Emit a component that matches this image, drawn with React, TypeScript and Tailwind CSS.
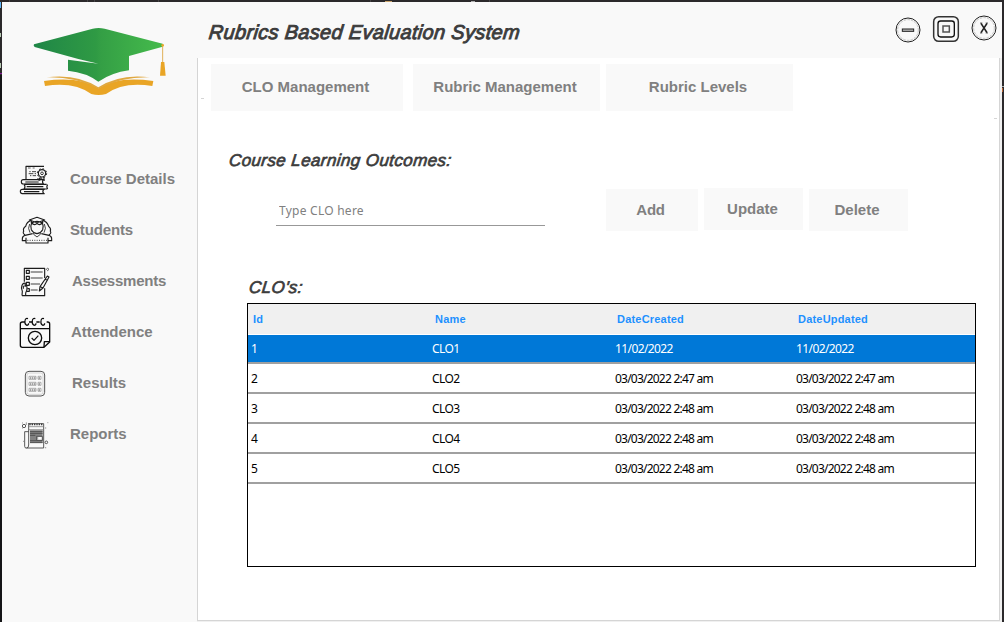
import React from "react";

const INK = "#1c1c1c";

function Logo() {
  return (
    <svg className="h-[120px] w-[195px] shrink-0" viewBox="6 6 585 360">
      <defs>
        <linearGradient id="cap" x1="0" x2="1" y1="0" y2="0">
          <stop offset="0" stopColor="#1f8647" />
          <stop offset="0.48" stopColor="#2f9a44" />
          <stop offset="0.52" stopColor="#349f45" />
          <stop offset="1" stopColor="#45bb4c" />
        </linearGradient>
      </defs>
      <path
        fill="url(#cap)"
        d="M102 133 L278 86 Q296 82 314 86 L488 131 Q492 136 488 140 L387 168 V211 Q335 218 295 245 Q260 218 204 212 V179 L295 191 L235 177 L104 141 Q99 137 102 133Z"
      />
      <path stroke="#e0b058" strokeWidth="3" d="M488 136 V186" />
      <circle cx="488" cy="136" r="4" fill="#e8a72c" />
      <path fill="#e9a526" d="M483 186 H493 L497 227 H480Z" />
      <path fill="#e9a526" d="M132 243 Q240 228 296 265 Q350 228 460 243 L457 258 Q370 244 318 282 Q296 288 274 282 Q222 244 135 258Z" />
      <path fill="#e0a840" d="M140 232 Q230 220 295 262 Q360 220 450 232 Q365 230 296 266 Q226 230 140 232Z" />
    </svg>
  );
}

const iconProps = {
  className: "h-[51px] w-9 shrink-0",
  fill: "none",
  stroke: INK,
  strokeWidth: 3.4,
  strokeLinejoin: "round" as const,
};

const CourseIcon = () => (
  <svg {...iconProps} viewBox="54 9 108 153">
    <path d="M78 88 V49 H132 M111 87 H124" />
    <path d="M84 54 H92 M98 54 H104" strokeWidth="2" />
    <path d="M88 65 H92 M96 65 H108 M86 71 H100 M104 71 H108 M90 77 H94 M98 77 H108" strokeWidth="2.5" />
    <circle cx="126" cy="70" r="11" strokeWidth="3.5" />
    <circle cx="126" cy="70" r="14" strokeWidth="3" strokeDasharray="5 6" />
    <circle cx="126" cy="70" r="4" strokeWidth="2.5" />
    <path d="M120 82 L117 91 L125 87 L133 91 L131 81" />
    <path d="M132 89 H70 Q64 89 64 95 Q64 102 70 102 H132 M130 89 Q125 95 130 102 M76 96 H116" />
    <path d="M74 103 H140 M143 104 Q138 110 143 117 M142 117 H72 Q78 110 72 103 M80 110 H130" />
    <path d="M134 118 H67 Q61 118 61 124 Q61 131 67 131 H134 M131 118 Q126 124 131 131 M72 125 H118" />
  </svg>
);

const StudentsIcon = () => (
  <svg {...iconProps} viewBox="54 162 108 153">
    <path d="M88 210 L111 202 L134 210 L111 218Z M94 213 V219 Q111 209 128 219 V213" />
    <path d="M94 211 Q80 215 77 229 Q68 235 71 244 Q67 249 75 255 M128 211 Q142 215 146 229 Q154 235 151 244 Q155 249 147 255" />
    <path d="M95 219 Q90 229 94 239 Q99 249 111 251 Q123 249 128 239 Q132 229 127 219 Q118 228 111 220 Q104 228 95 219" />
    <path d="M89 222 Q82 235 90 248 M133 222 Q140 235 132 248" strokeWidth="2.5" />
    <path d="M101 248 V253 L111 261 L121 253 V248" strokeWidth="2.5" />
    <path d="M98 251 L75 256 Q67 259 67 266 V272 H78 M124 251 L147 256 Q155 259 155 266 V272 H144" />
    <path d="M78 263 V279 H144 V263" />
    <path d="M82 271 H141" strokeDasharray="3 4" strokeWidth="2.5" />
  </svg>
);

const AssessmentsIcon = () => (
  <svg {...iconProps} viewBox="54 315 108 153">
    <path d="M73 395 V355 H134 V384 M134 415 V437 H66" />
    <path d="M79 361 H88 V370 H79Z M79 379 H88 V388 H79Z M79 397 H88 V406 H79Z M82 416 H88 V424 H79" />
    <path d="M92 366 H128 M92 384 H128 M92 402 H120 M92 420 H113" strokeWidth="2.5" />
    <path d="M142 378 L147 381 L129 414 L118 423 L120 410Z M136 388 L143 392 M121 410 L129 414" />
    <path d="M66 437 L67 424 Q62 414 66 406 Q70 398 76 400 L75 409 Q80 404 81 412 Q82 420 77 429 V437 M70 407 V416" />
    <path d="M143 354 L147 358 L143 362 L139 358Z" strokeWidth="2" />
  </svg>
);

const AttendenceIcon = () => (
  <svg {...iconProps} viewBox="54 3 108 153" stroke="#0c0c0c" strokeWidth={4}>
    <path d="M75 51 H67 Q61 51 61 57 V121 Q61 127 67 127 H132 L149 111 V57 Q149 51 143 51 H140 M87 51 H97 M109 51 H119 M61 71 H149" />
    <path d="M84 41 Q76 38 75 47 Q73 58 80 61 Q86 61 86 55 M106 41 Q98 38 97 47 Q95 58 102 61 Q108 61 108 55 M132 41 Q124 38 123 47 Q121 58 128 61 Q134 61 134 55" strokeWidth="3.5" />
    <circle cx="105" cy="99" r="20" />
    <path d="M95 99 L102 106 L115 92" strokeWidth="3.5" />
    <path d="M132 126 L133 110 H148" />
  </svg>
);

const ResultsIcon = () => (
  <svg {...iconProps} viewBox="54 156 108 153" stroke="#555555" strokeWidth={3}>
    <rect x="76" y="199" width="58" height="74" rx="11" />
    <rect x="81" y="204" width="48" height="64" rx="7" stroke="#b0b0b0" strokeWidth="1.5" />
    {[214, 232, 250].map((y) => (
      <g key={y} strokeWidth="2">
        <path d={`M87 ${y} H108 V${y + 9} H87Z M114 ${y} H123 V${y + 9} H114Z`} stroke="#8b8b8b" />
        <path d={`M90 ${y + 5} H106 M116 ${y + 5} H122`} strokeDasharray="4 2" strokeWidth="3" />
      </g>
    ))}
  </svg>
);

const ReportsIcon = () => (
  <svg {...iconProps} viewBox="54 309 108 153" strokeWidth={2.5} stroke="#3a3a3a">
    <path d="M86 356 H131 V429 H78 Q74 429 74 424 V380 H86 M86 354 V420 Q86 429 80 429" />
    <path d="M88 358 H130" strokeDasharray="4 3" strokeWidth="5" />
    <path d="M87 365 H130 M87 374 H130" stroke="#888888" />
    <path d="M90 376 H128 V414 H90Z" fill="#828282" stroke="none" />
    <path d="M90 379 H128 M90 385 H128 M90 391 H106 M90 407 H128 M90 413 H128" strokeWidth="2" />
    <path d="M110 394 H127 V406 H110Z" fill="#f9f9f9" />
    <path d="M113 396 V404" stroke="#888888" />
    <circle cx="72" cy="363" r="5" />
    <circle cx="139" cy="412" r="4" />
    <path d="M66 354 H69 M79 352 V360 M142 353 H145 M137 367 V371 M69 409 H72 M137 426 V430 M66 369 H69" stroke="#888888" />
  </svg>
);

const navItems = [
  { label: "Course Details", Icon: CourseIcon, text: "pl-4" },
  { label: "Students", Icon: StudentsIcon, text: "pl-4 tracking-[-0.15px]" },
  { label: "Assessments", Icon: AssessmentsIcon, text: "pl-[18px] tracking-[-0.25px]" },
  { label: "Attendence", Icon: AttendenceIcon, text: "pl-[17px]" },
  { label: "Results", Icon: ResultsIcon, text: "pl-[18px]" },
  { label: "Reports", Icon: ReportsIcon, text: "pl-4" },
];

function Sidebar() {
  return (
    <aside className="flex w-[195px] shrink-0 flex-col bg-[#f9f9f9]">
      <Logo />
      <nav className="mt-[31px] flex flex-col pl-4">
        {navItems.map(({ label, Icon, text }) => (
          <button key={label} className="flex h-[51px] items-center text-[15px] font-bold text-[#808080]">
            <Icon />
            <span className={`pt-0.5 ${text}`}>{label}</span>
          </button>
        ))}
      </nav>
    </aside>
  );
}

function WindowControls() {
  return (
    <svg className="h-9 w-[110px]" viewBox="102 36 330 108" fill="none" stroke="#222222">
      <circle cx="144" cy="90" r="36" strokeWidth="3" />
      <circle cx="144" cy="90" r="31" strokeWidth="2" stroke="#aaaaaa" strokeDasharray="8 3" />
      <rect x="127" y="87" width="34" height="7" fill="#bbbbbb" strokeWidth="3" />
      <rect x="221" y="50" width="74" height="74" rx="15" strokeWidth="4.5" stroke="#333333" />
      <rect x="234" y="63" width="49" height="48" rx="8" strokeWidth="4" stroke="#111111" />
      <rect x="249" y="78" width="19" height="18" strokeWidth="4.5" stroke="#555555" />
      <circle cx="372" cy="84" r="36" strokeWidth="3" />
      <circle cx="372" cy="84" r="31" strokeWidth="2" stroke="#aaaaaa" strokeDasharray="8 3" />
      <path d="M363 70 L381 98 M381 70 L363 98" strokeWidth="5" />
      <path d="M360 69 H367 M377 69 H384 M360 99 H367 M377 99 H384" strokeWidth="2" />
    </svg>
  );
}

const rows = [
  ["1", "CLO1", "11/02/2022", "11/02/2022"],
  ["2", "CLO2", "03/03/2022 2:47 am", "03/03/2022 2:47 am"],
  ["3", "CLO3", "03/03/2022 2:48 am", "03/03/2022 2:48 am"],
  ["4", "CLO4", "03/03/2022 2:48 am", "03/03/2022 2:48 am"],
  ["5", "CLO5", "03/03/2022 2:48 am", "03/03/2022 2:48 am"],
];

const columns = "grid grid-cols-[181px_183px_181px_182px] items-center";

function OutcomesTable() {
  return (
    <div className="ml-[49px] h-[264px] w-[729px] border border-black bg-white">
      <div className={`${columns} h-[31px] border-b border-white bg-[#f0f0f0] text-[11px] font-bold tracking-[0.2px] text-[#1e90ff]`}>
        <span className="pl-[5px]">Id</span>
        <span className="pl-1.5">Name</span>
        <span className="pl-[5px]">DateCreated</span>
        <span className="pl-[5px]">DateUpdated</span>
      </div>
      {rows.map((row, i) => (
        <div
          key={row[0]}
          className={`${columns} border-b-2 border-[#a0a0a0] font-['Noto_Sans',sans-serif] text-[12px] ${
            i === 0 ? "h-[29px] bg-[#0078d7] text-white" : "h-[30px] pt-0.5 text-black"
          }`}
        >
          {row.map((cell, j) => (
            <span
              key={j}
              className={`pl-[3px] whitespace-nowrap ${
                cell.length > 10 ? "tracking-[-0.78px] [word-spacing:0.1px]" : "tracking-[-0.6px]"
              }`}
            >
              {cell}
            </span>
          ))}
        </div>
      ))}
    </div>
  );
}

const tabClass = "h-[47px] bg-[#f9f9f9] pr-[3px] pb-px text-[15px] font-bold text-[#808080]";
const actionClass = "h-[42px] bg-[#f9f9f9] text-[15px] font-bold text-[#808080]";
const headingClass =
  "w-max origin-left -skew-x-6 text-[17px] leading-5 italic tracking-[0.4px] text-[#3c3c3c] [-webkit-text-stroke:0.7px_#3c3c3c]";

export default function App() {
  return (
    <div className="relative flex h-[622px] w-[1004px] overflow-hidden bg-[#2b292b] px-0.5 pt-0.5 font-['Liberation_Sans',Arial,sans-serif]">
      <svg className="absolute inset-0 h-[622px] w-[1004px]" viewBox="0 0 1004 622">
        <path fill="#151517" d="M0 75h2v547h-2z" />
        <path fill="#60b5f5" d="M0 2h1v6h-1z" />
        <path fill="#b9cbb5" d="M0 33h1v4h-1zM0 63h1v5h-1z" />
        <path fill="#881798" d="M0 73h2v1h-2z" />
        <path fill="#c8a36c" d="M385 1h7v1h-7z" />
        <path fill="#aaaaaa" d="M471 1h4v1h-4zM1002 86h2v1h-2z" />
        <path fill="#ba6232" d="M1002 88h1v4h-1z" />
        <path fill="#454345" d="M9 0h1v2h-1zM87 0h1v2h-1zM94 0h1v2h-1zM158 0h1v2h-1zM370 0h1v2h-1zM489 0h1v2h-1z" />
      </svg>
      <div className="relative flex flex-1">
        <Sidebar />
        <div className="flex flex-1 flex-col bg-[#f0f0f0]">
          <header className="flex h-14 shrink-0 items-start justify-between bg-[#f9f9f9] pl-3">
            <h1 className="mt-[18px] origin-left -skew-x-6 text-[20px] leading-6 italic tracking-[0.32px] text-[#3c3c3c] [-webkit-text-stroke:0.9px_#3c3c3c]">
              Rubrics Based Evaluation System
            </h1>
            <div className="mt-2.5 -mr-0.5">
              <WindowControls />
            </div>
          </header>
          <main className="mr-0.5 h-[563px] border-x border-b border-[#d5d5d5] bg-white">
            <div className="flex pt-1.5">
              <span className="mt-[34px] ml-[3px] h-px w-[3px] bg-[#d5d5d5]" />
              <button className={`${tabClass} ml-[7px] w-48`}>CLO Management</button>
              <button className={`${tabClass} ml-2.5 w-[187px]`}>Rubric Management</button>
              <button className={`${tabClass} ml-1.5 w-[187px]`}>Rubric Levels</button>
              <span className="mt-[54px] mr-0.5 ml-auto h-px w-[3px] bg-[#d5d5d5]" />
            </div>
            <h2 className={`${headingClass} mt-8 ml-[31px]`}>Course Learning Outcomes:</h2>
            <div className="mt-4 flex h-[44px] items-start">
              <input
                className="mt-2 ml-[78px] h-[31px] w-[269px] border-b border-[#989898] pl-[3px] font-['Noto_Sans',sans-serif] text-[12px] tracking-[0.25px] outline-none placeholder:text-[#808080]"
                placeholder="Type CLO here"
              />
              <button className={`${actionClass} mt-[2px] ml-[61px] w-[92px] pr-[3px] tracking-[-0.3px]`}>Add</button>
              <button className={`${actionClass} mt-px ml-1.5 w-[99px] pr-0.5`}>Update</button>
              <button className={`${actionClass} mt-[2px] ml-1.5 w-[99px] pr-[3px]`}>Delete</button>
            </div>
            <h2 className={`${headingClass} mt-[47px] mb-[5px] ml-[51px]`}>CLO's:</h2>
            <OutcomesTable />
          </main>
        </div>
      </div>
    </div>
  );
}
